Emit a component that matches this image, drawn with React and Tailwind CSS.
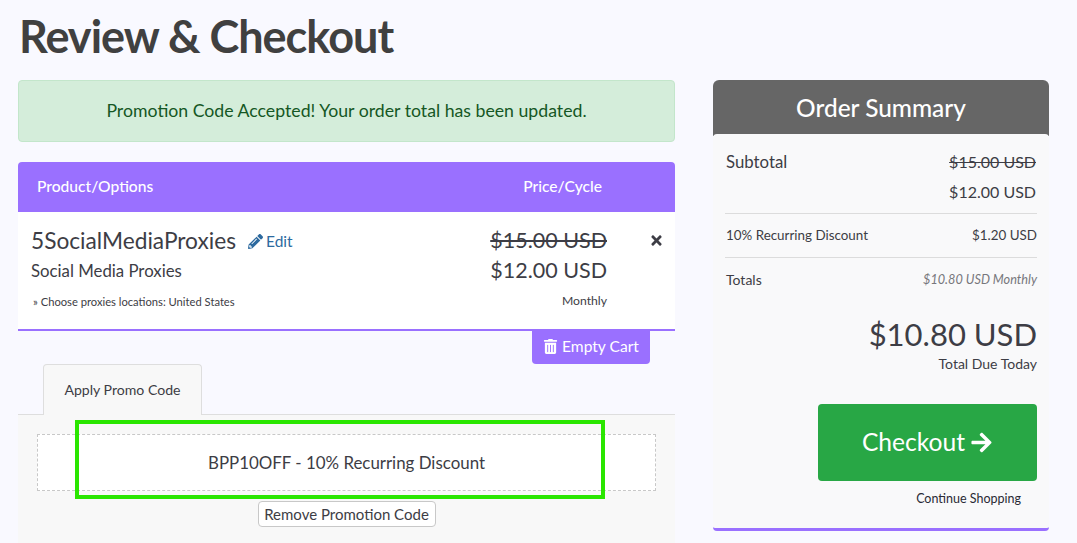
import React from "react";
import { FaPencilAlt, FaTimes, FaTrashAlt, FaArrowRight } from "react-icons/fa";

export default function App() {
  return (
    <div className="relative h-[543px] w-[1077px] overflow-hidden bg-[#f9f9ff] font-['Lato','Liberation_Sans',sans-serif] text-[#3d3d45]">
      <h1 className="h-[80px] pl-[19px] pt-[7px] text-[45px] font-bold leading-[58px] tracking-[-1px] text-[#404040]">Review &amp; Checkout</h1>
      <div className="flex items-start pl-[18px]">
        <div className="flex w-[657px] flex-col">
          <div className="flex h-[62px] items-center justify-center rounded-[4px] border border-[#c3e6cb] bg-[#d4edda] text-[17.7px] text-[#155724]">
            Promotion Code Accepted! Your order total has been updated.
          </div>
          <div className="mt-[20px] flex h-[50px] items-center rounded-t-[4px] bg-[#9a70ff] text-[15.6px] font-medium text-white">
            <span className="ml-[19px] flex-1">Product/Options</span>
            <span className="mr-[73px]">Price/Cycle</span>
          </div>
          <div className="flex h-[119px] border-b-2 border-[#9a70ff] bg-white">
            <div className="flex-1 pl-[13px] pt-[16px]">
              <div className="flex items-center leading-[26px]">
                <span className="text-[22.7px]">5SocialMediaProxies</span>
                <FaPencilAlt className="ml-[12px] text-[15px] text-[#2d6a9f]" />
                <span className="ml-[3px] text-[15.5px] text-[#2d6a9f]">Edit</span>
              </div>
              <div className="mt-[5px] text-[16.8px] leading-[24px]">Social Media Proxies</div>
              <div className="ml-[2px] mt-[12px] text-[11.2px] leading-[14px]">» Choose proxies locations: United States</div>
            </div>
            <div className="w-[180px] pt-[13px] text-right">
              <div className="text-[21.5px] leading-[30px] line-through">$15.00 USD</div>
              <div className="text-[21.5px] leading-[30px]">$12.00 USD</div>
              <div className="mt-[8px] text-[12.2px] leading-[16px]">Monthly</div>
            </div>
            <div className="flex w-[68px] justify-end pr-[11px] pt-[21px]">
              <FaTimes className="text-[15px] text-[#3d3d45]" />
            </div>
          </div>
          <div className="flex justify-end pr-[25px]">
            <div className="flex h-[33px] w-[118px] items-center justify-center gap-[4px] rounded-b-[4px] bg-[#9a70ff] pb-[2px] text-[15.6px] text-white">
              <FaTrashAlt className="text-[15px]" />
              Empty Cart
            </div>
          </div>
          <div className="flex h-[51px] border-b border-[#dedede] pl-[25px]">
            <div className="flex h-[51px] w-[159px] items-center justify-center rounded-t-[4px] border border-b-0 border-[#dedede] bg-[#f8f8f8] text-[14.1px]">
              Apply Promo Code
            </div>
          </div>
          <div className="flex h-[128px] flex-col items-center bg-[#f8f8f8] px-[19px] pt-[19px]">
            <div className="flex h-[57px] w-full items-center justify-center border border-dashed border-[#c8c8c8] bg-white text-[16.9px]">
              BPP10OFF - 10% Recurring Discount
            </div>
            <div className="mt-[10px] flex h-[26px] w-[178px] items-center justify-center rounded-[4px] border border-[#c8c8c8] bg-white text-[15px]">
              Remove Promotion Code
            </div>
          </div>
        </div>
        <div className="ml-[38px] flex w-[336px] flex-col">
          <div className="flex h-[56px] items-center justify-center rounded-t-[6px] bg-[#666666] text-[24.4px] font-medium text-white">
            Order Summary
          </div>
          <div className="-mt-[2px] flex h-[397px] flex-col rounded-[4px] border-b-[3px] border-[#9a70ff] bg-[#f9f9fa] pl-[13px] pr-[12px] pt-[13px]">
            <div className="flex justify-between leading-[30px]">
              <span className="text-[16.8px]">Subtotal</span>
              <div className="pr-[1px] text-right text-[16px]">
                <div className="line-through">$15.00 USD</div>
                <div>$12.00 USD</div>
              </div>
            </div>
            <div className="-ml-[1px] mt-[6px] flex h-[45px] items-center justify-between border-y border-[#dcdcdc] pl-[1px] text-[13.4px]">
              <span>10% Recurring Discount</span>
              <span>$1.20 USD</span>
            </div>
            <div className="flex h-[43px] items-center justify-between text-[14px]">
              <span>Totals</span>
              <span className="text-[12.7px] italic text-[#77777c]">$10.80 USD Monthly</span>
            </div>
            <div className="mt-[13px] text-right text-[31px] leading-[40px]">$10.80 USD</div>
            <div className="mt-[1px] text-right text-[14px] leading-[18px]">Total Due Today</div>
            <div className="mt-[31px] flex justify-end">
              <div className="flex h-[77px] w-[219px] items-center justify-center gap-[5px] rounded-[4px] bg-[#28a745] text-[24.6px] text-white">
                Checkout
                <FaArrowRight className="text-[23px]" />
              </div>
            </div>
            <div className="mt-[10px] pr-[16px] text-right text-[12.5px] leading-[16px] text-[#2a2a35]">Continue Shopping</div>
          </div>
        </div>
      </div>
      <div className="absolute left-[75px] top-[420px] h-[79px] w-[530px] border-[4px] border-[#2ae600]" />
    </div>
  );
}
